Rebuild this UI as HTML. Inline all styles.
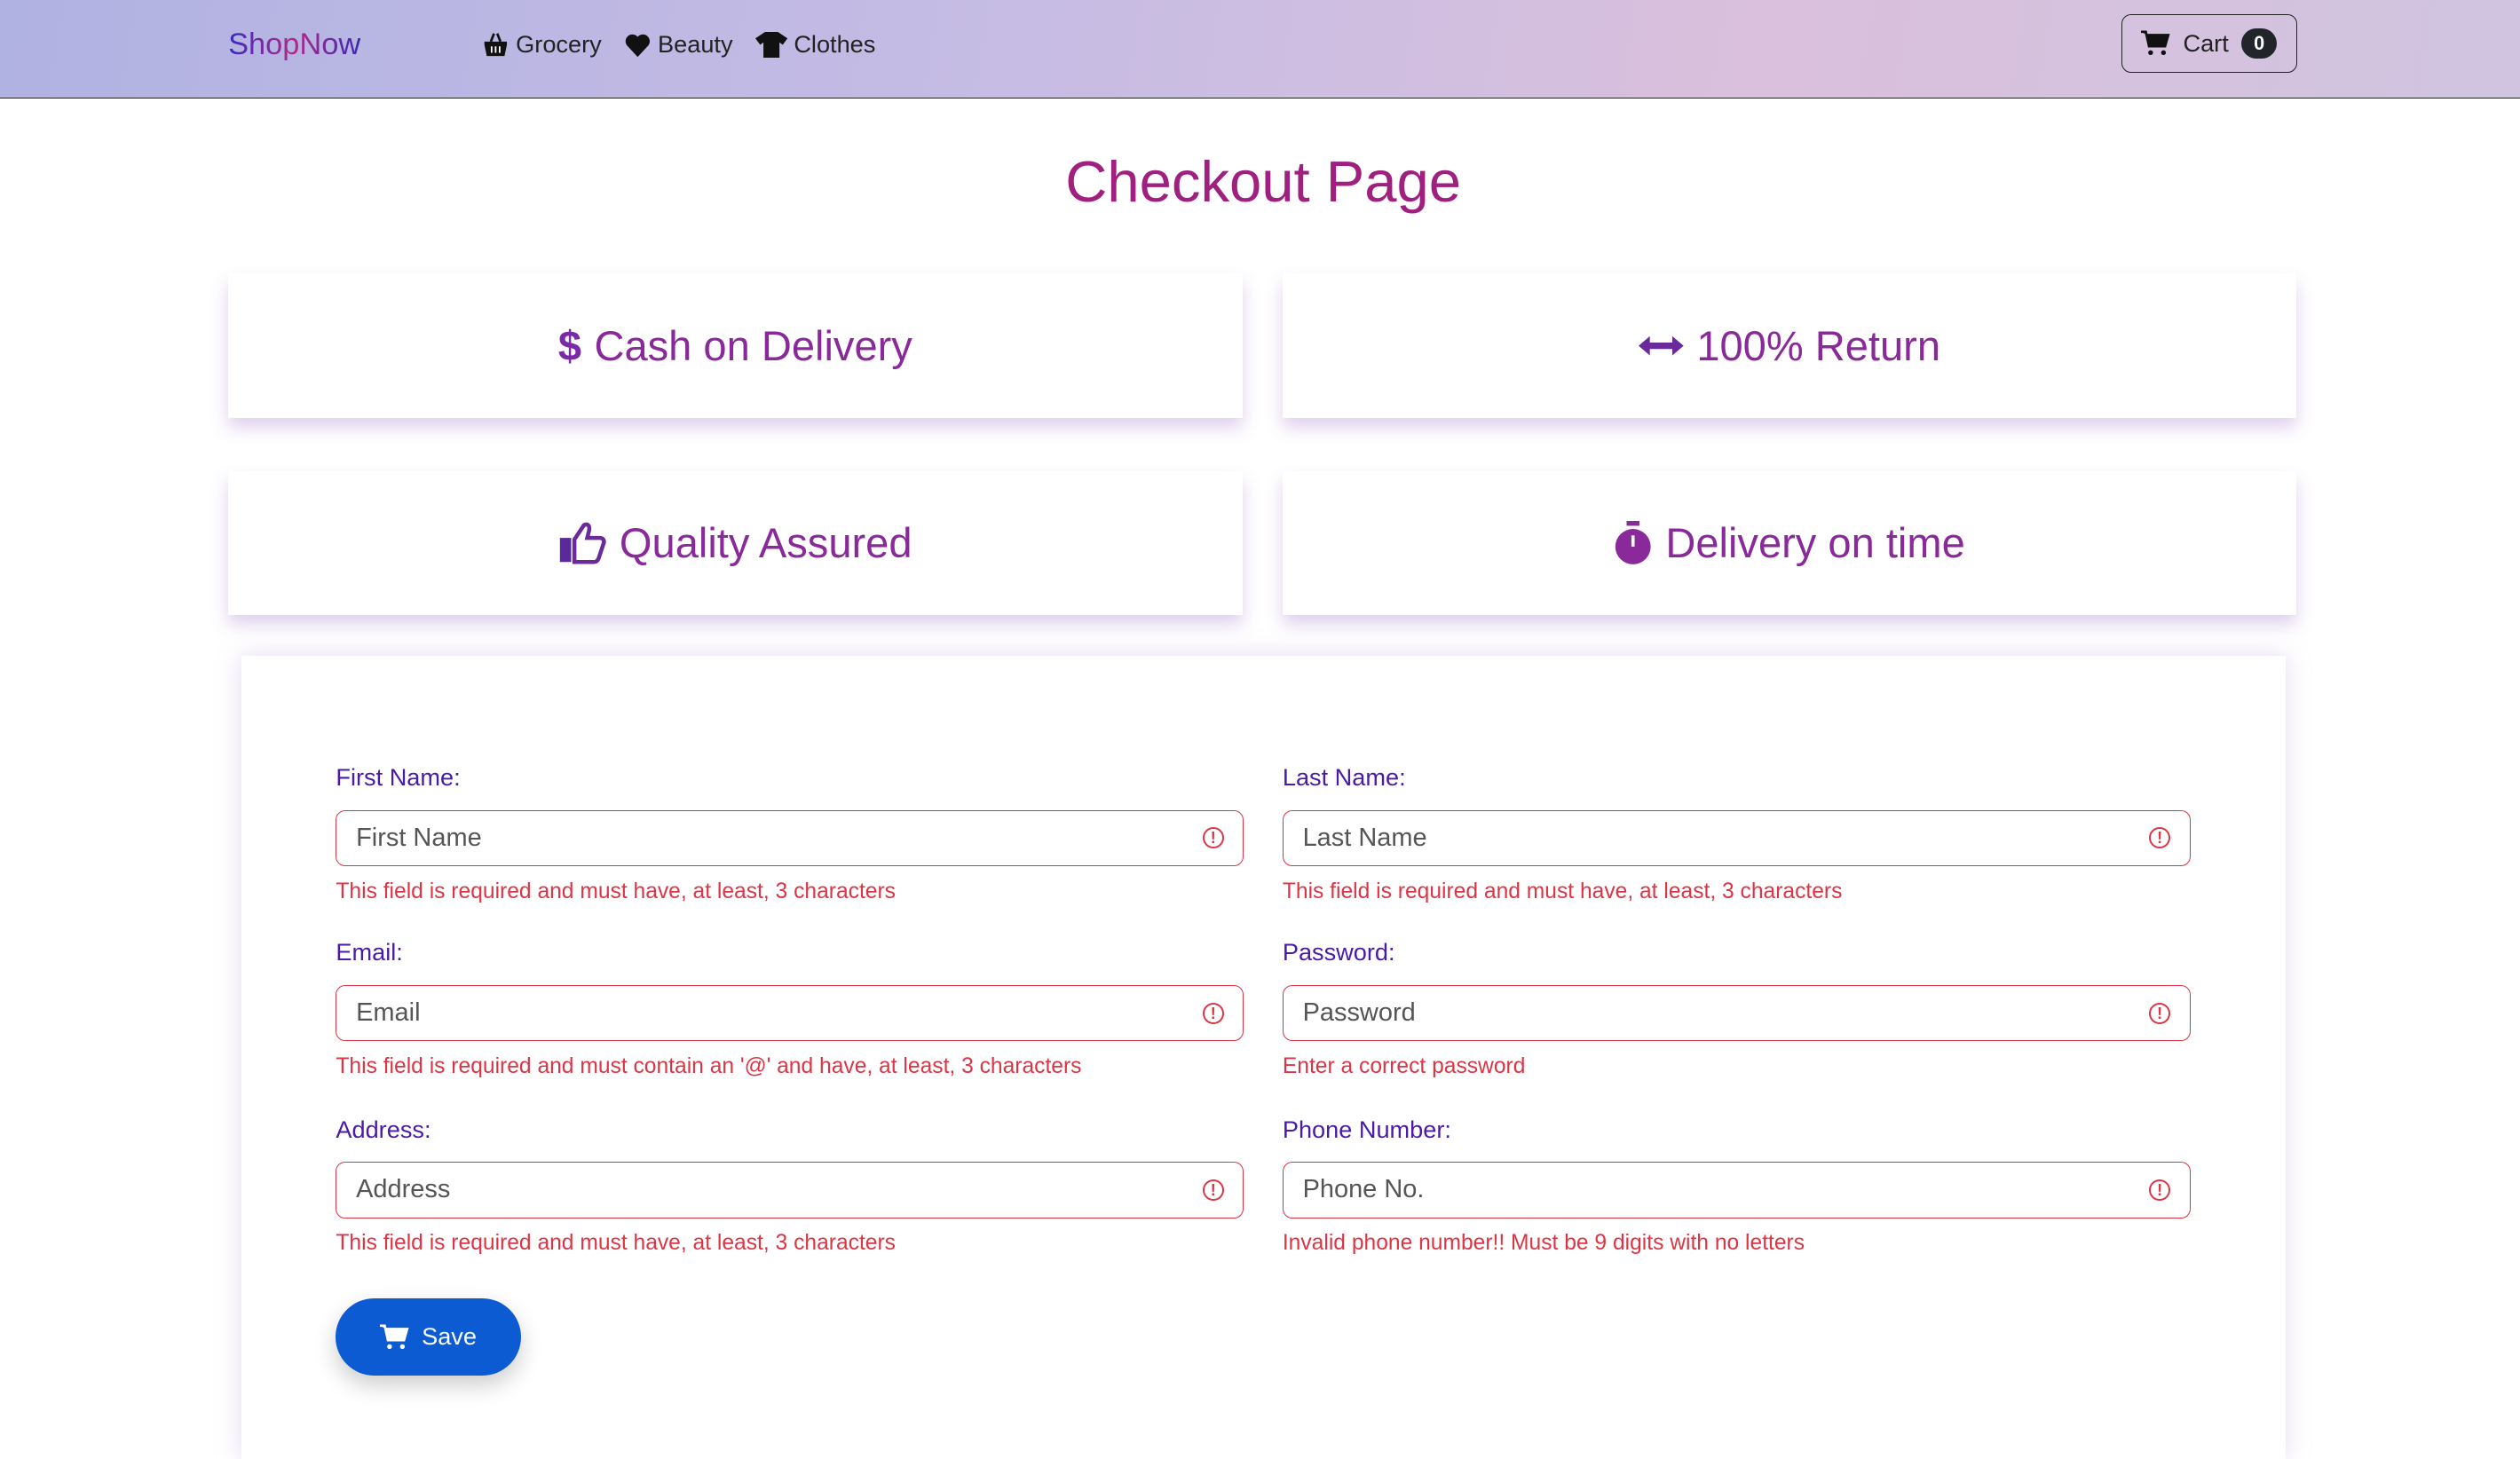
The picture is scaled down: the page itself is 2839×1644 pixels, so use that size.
<!DOCTYPE html>
<html><head><meta charset="utf-8"><style>
html{zoom:1.8106}
body{margin:0;width:1568px;height:894px;overflow:hidden;background:#fff;font-family:"Liberation Sans","DejaVu Sans",sans-serif}
.nav{height:61px;border-bottom:1px solid #222;background:linear-gradient(100deg,#b0b2e2 0%,#c6bce4 40%,#dac0dc 70%,#d0c4e0 100%);position:relative}
.brand{position:absolute;left:142px;top:17px;font-size:19px;background:linear-gradient(90deg,#3a2ac0,#b02a8a,#3a2ab0);-webkit-background-clip:text;color:transparent}
.links{position:absolute;left:300px;top:19px;font-size:15px;color:#222;display:flex;gap:14px}
.links span{display:flex;align-items:center;gap:4px}
.cart{position:absolute;left:1320px;top:9px;width:108px;height:35px;border:1px solid #222;border-radius:6px;display:flex;align-items:center;justify-content:center;gap:8px;font-size:15px;color:#222}
.badge{background:#212529;color:#fff;border-radius:12px;width:22px;height:19px;font-size:12px;font-weight:bold;display:flex;align-items:center;justify-content:center}
h1{position:absolute;left:0;width:1572px;top:92px;margin:0;text-align:center;font-weight:normal;font-size:36px;color:#a0207f}
.card{position:absolute;width:631px;height:90px;background:#fff;box-shadow:0 6px 10px rgba(150,100,200,.3);display:flex;align-items:center;justify-content:center;gap:8px;font-size:26px;color:#8a2a9a}
.form{position:absolute;left:150px;top:408px;width:1272px;height:500px;background:#fff;box-shadow:0 0 14px rgba(180,150,210,.35)}
.f{position:absolute;width:565px}
.f label{display:block;font-size:15px;color:#4a1aa8;height:19px}
.f .in{margin-top:10px;height:34px;border:1px solid #dc3545;border-radius:6px;display:flex;align-items:center;padding:0 12px;font-size:16px;color:#555;justify-content:space-between}
.f .er{margin-top:8px;font-size:13.6px;color:#dc3545}
.ex{width:11px;height:11px;border:1.5px solid #dc3545;border-radius:50%;color:#dc3545;font-size:10px;font-weight:bold;display:flex;align-items:center;justify-content:center;line-height:1}
.save{position:absolute;left:59px;top:400px;width:115px;height:48px;border-radius:24px;background:#0d5bd3;color:#fff;font-size:15px;display:flex;align-items:center;justify-content:center;gap:8px;box-shadow:0 6px 14px rgba(0,0,0,.2)}
</style></head><body>
<div class="nav">
<div class="brand">ShopNow</div>
<div class="links">
<span><svg width="17" height="16" viewBox="0 0 16 16"><path d="M5 6L7 1M11 6L9 1" stroke="#111" stroke-width="1.5" fill="none"/><path d="M1 6h14v2l-1.5 7h-11L1 8z" fill="#111"/><path d="M5.5 9v4M8 9v4M10.5 9v4" stroke="#fff"/></svg>Grocery</span>
<span><svg width="17" height="15" viewBox="0 0 16 15"><path d="M8 15L1.5 8A4 4 0 0 1 8 2.5 4 4 0 0 1 14.5 8z" fill="#111"/></svg>Beauty</span>
<span><svg width="20" height="16" viewBox="0 0 20 16"><path d="M6 0h8l6 4-3 4-2-1.5V16H5V6.5L3 8 0 4z" fill="#111"/></svg>Clothes</span>
</div>
<div class="cart"><svg width="18" height="16" viewBox="0 0 18 16"><path d="M0 1h3l2 9h10l2-7H4" fill="#111" stroke="#111" stroke-width="1.5"/><circle cx="6" cy="14" r="1.5" fill="#111"/><circle cx="14" cy="14" r="1.5" fill="#111"/></svg>Cart<div class="badge">0</div></div>
</div>
<h1>Checkout Page</h1>
<div class="card" style="left:142px;top:170px"><span style="font-weight:bold;color:#7a2aa8">$</span>Cash on Delivery</div>
<div class="card" style="left:798px;top:170px"><svg width="28" height="14" viewBox="0 0 28 14"><path d="M0 7l7-6v4h14V1l7 6-7 6V9H7v4z" fill="#6a2a9a"/></svg>100% Return</div>
<div class="card" style="left:142px;top:293px"><svg width="30" height="26" viewBox="0 0 30 26"><rect x="1" y="10" width="7" height="15" fill="#5a2a9a"/><path d="M10 11l6-9c2-1 4 0 3 4l-1 4h8c2 0 3 2 2 4l-3 9c-1 2-2 2-4 2H10z" fill="none" stroke="#6a2a9a" stroke-width="2.5"/></svg>Quality Assured</div>
<div class="card" style="left:798px;top:293px"><svg width="24" height="28" viewBox="0 0 24 28"><rect x="8" y="0" width="8" height="3" fill="#8a2a9a"/><circle cx="12" cy="16" r="11" fill="#8a2a9a"/><path d="M12 16V9" stroke="#fff" stroke-width="2"/></svg>Delivery on time</div>
<div class="form">
<div class="f" style="left:59px;top:67px"><label>First Name:</label><div class="in">First Name<div class="ex">!</div></div><div class="er">This field is required and must have, at least, 3 characters</div></div>
<div class="f" style="left:648px;top:67px"><label>Last Name:</label><div class="in">Last Name<div class="ex">!</div></div><div class="er">This field is required and must have, at least, 3 characters</div></div>
<div class="f" style="left:59px;top:176px"><label>Email:</label><div class="in">Email<div class="ex">!</div></div><div class="er">This field is required and must contain an '@' and have, at least, 3 characters</div></div>
<div class="f" style="left:648px;top:176px"><label>Password:</label><div class="in">Password<div class="ex">!</div></div><div class="er">Enter a correct password</div></div>
<div class="f" style="left:59px;top:286px"><label>Address:</label><div class="in">Address<div class="ex">!</div></div><div class="er">This field is required and must have, at least, 3 characters</div></div>
<div class="f" style="left:648px;top:286px"><label>Phone Number:</label><div class="in">Phone No.<div class="ex">!</div></div><div class="er">Invalid phone number!! Must be 9 digits with no letters</div></div>
<div class="save"><svg width="18" height="16" viewBox="0 0 18 16"><path d="M0 1h3l2 9h10l2-7H4" fill="#fff" stroke="#fff" stroke-width="1.5"/><circle cx="6" cy="14" r="1.5" fill="#fff"/><circle cx="14" cy="14" r="1.5" fill="#fff"/></svg>Save</div>
</div>
</body></html>
